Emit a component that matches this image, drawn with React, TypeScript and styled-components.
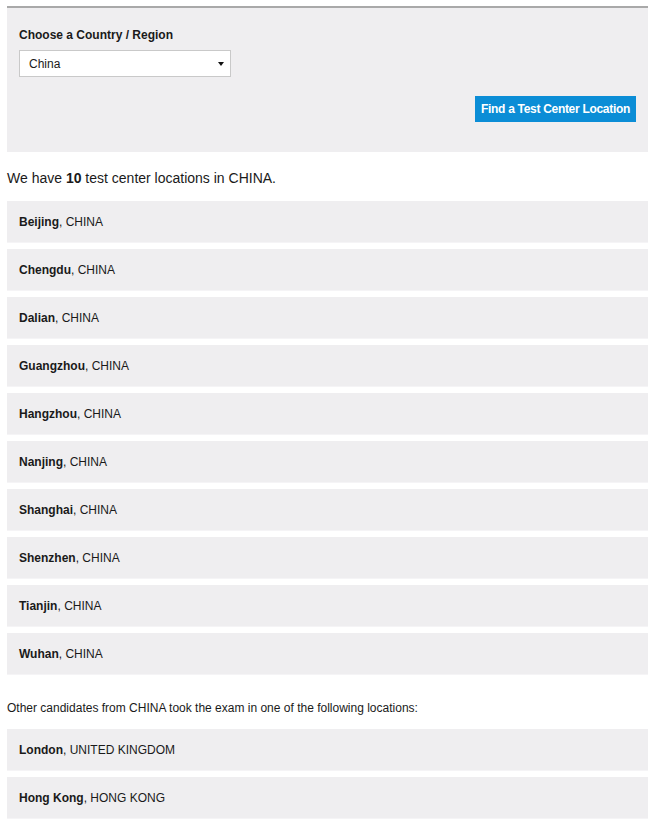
import React from 'react';
import styled, { createGlobalStyle } from 'styled-components';

const GlobalStyle = createGlobalStyle`
  body {
    margin: 0;
    background: #ffffff;
    font-family: "Liberation Sans", Arial, sans-serif;
    color: #1a1a1a;
  }
`;

const Page = styled.div`
  width: 641px;
  padding: 6px 9px 10px 7px;
`;

const SearchPanel = styled.section`
  border-top: 2px solid #a9a9a9;
  background: #efeef0;
  padding: 20px 12px 30px 12px;
  display: flex;
  flex-direction: column;
`;

const Label = styled.label`
  font-size: 12px;
  font-weight: bold;
  line-height: 14px;
  color: #1a1a1a;
`;

const SelectWrap = styled.div`
  position: relative;
  width: 212px;
  margin-top: 8px;

  &::after {
    content: '';
    position: absolute;
    right: 7px;
    top: 12px;
    border-left: 3px solid transparent;
    border-right: 3px solid transparent;
    border-top: 4px solid #111;
    pointer-events: none;
  }
`;

const Select = styled.select`
  appearance: none;
  width: 100%;
  height: 27px;
  box-sizing: border-box;
  border: 1px solid #c9c9c9;
  background: #ffffff;
  padding: 0 20px 0 9px;
  font-family: "Liberation Sans", Arial, sans-serif;
  font-size: 12px;
  color: #1a1a1a;
  border-radius: 0;
  outline: none;
`;

const ButtonRow = styled.div`
  display: flex;
  justify-content: flex-end;
  margin-top: 19px;
`;

const FindButton = styled.button`
  height: 26px;
  padding: 0 6px;
  border: none;
  border-radius: 0;
  background: #0b8dd6;
  color: #ffffff;
  font-family: "Liberation Sans", Arial, sans-serif;
  font-size: 12px;
  font-weight: bold;
  letter-spacing: -0.3px;
  cursor: pointer;
`;

const Intro = styled.p`
  margin: 17px 0 14px 0;
  font-size: 14px;
  line-height: 18px;
  color: #1a1a1a;
`;

const Note = styled.p`
  margin: 26px 0 14px 0;
  font-size: 12px;
  line-height: 14px;
  color: #1a1a1a;
`;

const LocationList = styled.ul`
  list-style: none;
  margin: 0;
  padding: 0;
  display: flex;
  flex-direction: column;
  gap: 6px;
`;

const LocationRow = styled.li`
  height: 42px;
  box-sizing: border-box;
  display: flex;
  align-items: center;
  padding: 0 12px;
  background: #efeef0;
  border-bottom: 1px solid #f5f4f6;
  font-size: 12px;
  color: #1a1a1a;

  strong {
    font-weight: bold;
  }
`;

type Location = { city: string; country: string };

const chinaLocations: Location[] = [
  'Beijing',
  'Chengdu',
  'Dalian',
  'Guangzhou',
  'Hangzhou',
  'Nanjing',
  'Shanghai',
  'Shenzhen',
  'Tianjin',
  'Wuhan'
].map((city) => ({ city, country: 'CHINA' }));

const otherLocations: Location[] = [
  { city: 'London', country: 'UNITED KINGDOM' },
  { city: 'Hong Kong', country: 'HONG KONG' }
];

const Locations = ({ items }: { items: Location[] }) => (
  <LocationList>
    {items.map((loc) => (
      <LocationRow key={loc.city}>
        <span>
          <strong>{loc.city}</strong>, {loc.country}
        </span>
      </LocationRow>
    ))}
  </LocationList>
);

const App = () => {
  return (
    <Page>
      <GlobalStyle />
      <SearchPanel>
        <Label htmlFor="country">Choose a Country / Region</Label>
        <SelectWrap>
          <Select id="country" defaultValue="China">
            <option>China</option>
            <option>Hong Kong</option>
            <option>United Kingdom</option>
          </Select>
        </SelectWrap>
        <ButtonRow>
          <FindButton type="button">Find a Test Center Location</FindButton>
        </ButtonRow>
      </SearchPanel>

      <Intro>
        We have <strong>10</strong> test center locations in CHINA.
      </Intro>
      <Locations items={chinaLocations} />

      <Note>Other candidates from CHINA took the exam in one of the following locations:</Note>
      <Locations items={otherLocations} />
    </Page>
  );
};

export default App;
